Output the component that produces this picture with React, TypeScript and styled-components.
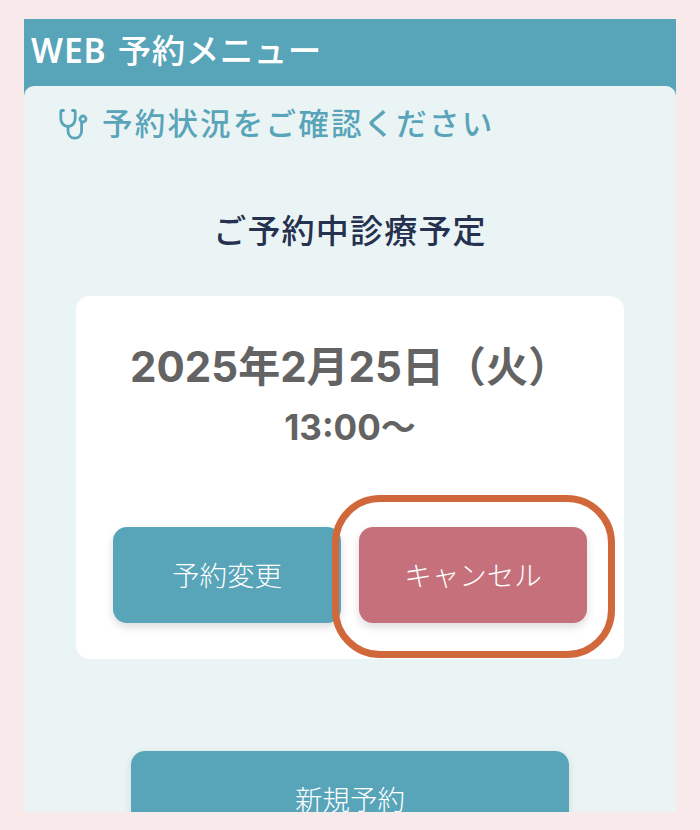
import styled, { createGlobalStyle } from "styled-components";

const GlobalStyle = createGlobalStyle`
	html, body {
		margin: 0;
		padding: 0;
		background: #f8e9ea;
	}

	* {
		box-sizing: border-box;
	}
`;

const PageSC = styled.div`
	width: 700px;
	height: 830px;
	padding: 19px 24px 18px;
	font-family: Inter, "Noto Sans CJK JP", sans-serif;
	overflow: hidden;
`;

const FrameSC = styled.div`
	height: 100%;
	display: flex;
	flex-direction: column;
	background: #58a4b9;
	overflow: hidden;
`;

const HeaderSC = styled.h1`
	flex: none;
	height: 67px;
	margin: 0;
	padding: 0 0 4px 7px;
	display: flex;
	align-items: center;
	gap: 11px;
	color: #fff;
	font-family: "Noto Sans", "Noto Sans CJK JP", sans-serif;
	font-size: 33.5px;
	font-weight: 500;
	line-height: 1;
	letter-spacing: 0.5px;

	b {
		font-weight: 600;
		letter-spacing: 1px;
	}
`;

const PanelSC = styled.main`
	flex: 1;
	min-height: 0;
	padding: 16px 52px 0;
	background: #ebf4f4;
	border-radius: 10px 10px 0 0;
	overflow: hidden;
`;

const NoticeSC = styled.h2`
	margin: 0 0 0 -20px;
	height: 44px;
	display: flex;
	align-items: center;
	gap: 12px;
	color: #58a4b9;
	font-size: 30.5px;
	font-weight: 500;
	line-height: 1;
	letter-spacing: 2.2px;

	svg {
		flex: none;
		width: 34px;
		height: 34px;
	}
`;

const HeadingSC = styled.h3`
	margin: 63px 0 0;
	height: 44px;
	text-align: center;
	color: #26304f;
	font-size: 33px;
	font-weight: 500;
	line-height: 44px;
	letter-spacing: 1.2px;
`;

const CardSC = styled.section`
	position: relative;
	margin-top: 43px;
	height: 363px;
	padding: 43px 37px 36px;
	display: flex;
	flex-direction: column;
	background: #fff;
	border-radius: 14px;
`;

const DateSC = styled.div`
	text-align: center;
	color: #636363;
	font-size: 42px;
	font-weight: 700;
	line-height: 56px;
	white-space: nowrap;
`;

const TimeSC = styled.div`
	margin-top: 7px;
	text-align: center;
	color: #636363;
	font-size: 35px;
	font-weight: 700;
	line-height: 50px;
`;

const ActionsSC = styled.div`
	margin-top: auto;
	display: grid;
	grid-template-columns: 228px 228px;
	gap: 18px;
`;

const ActionButtonSC = styled.button<{ $danger?: boolean }>`
	height: 96px;
	padding: 0;
	border: 0;
	border-radius: 14px;
	background: ${(p) => (p.$danger ? "#c5707b" : "#58a4b9")};
	box-shadow: 0 4px 8px rgba(0, 0, 0, 0.14);
	color: #fff;
	font-family: "Noto Sans CJK JP", sans-serif;
	font-size: 27.5px;
	font-weight: 300;
	line-height: 1;
`;

const HighlightSC = styled.div`
	position: absolute;
	left: 256px;
	top: 199px;
	width: 283px;
	height: 163px;
	border: 7px solid #d1683b;
	border-radius: 48px;
	pointer-events: none;
`;

const NewButtonSC = styled.button`
	display: block;
	width: 438px;
	height: 96px;
	margin: 92px auto 0;
	padding: 0;
	border: 0;
	border-radius: 14px;
	background: #58a4b9;
	box-shadow: 0 2px 8px rgba(0, 0, 0, 0.1);
	color: #fff;
	font-family: "Noto Sans CJK JP", sans-serif;
	font-size: 27.5px;
	font-weight: 300;
	line-height: 1;
`;

function StethoscopeIcon()
{
	return (
		<svg viewBox="0 0 34 34" fill="none" stroke="#58a4b9" strokeWidth="2.8" strokeLinecap="round" strokeLinejoin="round">
			<path d="M7.5 3.5H6.2C5.3 3.5 4.8 4 4.8 4.9V11.5C4.8 16.2 8 19.5 12 19.5C16 19.5 19.2 16.2 19.2 11.5V4.9C19.2 4 18.7 3.5 17.8 3.5H16.5" />
			<path d="M12 19.5V23.5C12 28.2 15 31.2 18.8 31.2C22.6 31.2 25.6 28.2 25.6 23.5V15.5" />
			<circle cx="27" cy="12" r="3" />
		</svg>
	);
}

export default function App()
{
	return (
		<PageSC>
			<GlobalStyle />
			<FrameSC>
				<HeaderSC><b>WEB</b>予約メニュー</HeaderSC>
				<PanelSC>
					<NoticeSC>
						<StethoscopeIcon />
						予約状況をご確認ください
					</NoticeSC>
					<HeadingSC>ご予約中診療予定</HeadingSC>
					<CardSC>
						<DateSC>2025年2月25日（火）</DateSC>
						<TimeSC>13:00～</TimeSC>
						<ActionsSC>
							<ActionButtonSC>予約変更</ActionButtonSC>
							<ActionButtonSC $danger>キャンセル</ActionButtonSC>
						</ActionsSC>
						<HighlightSC />
					</CardSC>
					<NewButtonSC>新規予約</NewButtonSC>
				</PanelSC>
			</FrameSC>
		</PageSC>
	);
}
